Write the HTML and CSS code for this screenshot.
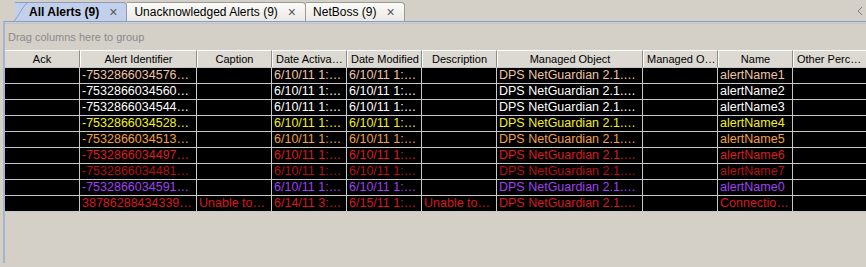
FILE: index.html
```html
<!doctype html>
<html lang="en">
  <head>
    <meta charset="UTF-8" />
    <title>Alerts</title>
    <link rel="stylesheet" href="styles.css">
  </head>
  <body>
    <div class="tabs">
      <div class="tab active">
        <svg class="tab-slant" width="14" height="19" viewBox="0 0 14 19">
          <path d="M0 19 C5 14 8 5 13 1 L14 0 L14 19 Z" fill="#c3d0ec" />
          <path d="M0 19 C5 14 8 5 13 1 L14 0.5" fill="none" stroke="#8c9cbc" />
        </svg>
        <span class="tab-label">All Alerts (9)</span>
        <span class="tab-close">&times;</span>
      </div>
      <div class="tab">
        <span class="tab-label">Unacknowledged Alerts (9)</span>
        <span class="tab-close">&times;</span>
      </div>
      <div class="tab">
        <span class="tab-label">NetBoss (9)</span>
        <span class="tab-close">&times;</span>
      </div>
      <svg class="scroll-left" width="6" height="10" viewBox="0 0 6 10">
        <path d="M5 1 L1 5 L5 9" fill="none" stroke="#808080" />
      </svg>
    </div>

    <div class="panel">
      <div class="group-box">Drag columns here to group</div>

      <div class="grid">
        <div class="head">Ack</div>
        <div class="head">Alert Identifier</div>
        <div class="head">Caption</div>
        <div class="head left">Date Activa…</div>
        <div class="head left">Date Modified</div>
        <div class="head">Description</div>
        <div class="head">Managed Object</div>
        <div class="head left">Managed O…</div>
        <div class="head">Name</div>
        <div class="head left">Other Perc…</div>
      </div>
      <div class="grid rows" id="rows"></div>
    </div>

    <script>
      const rows = [
        ['peach', '-7532866034576…', '', '6/10/11 1:…', '6/10/11 1:…', '', 'alertName1'],
        ['white', '-7532866034560…', '', '6/10/11 1:…', '6/10/11 1:…', '', 'alertName2'],
        ['white', '-7532866034544…', '', '6/10/11 1:…', '6/10/11 1:…', '', 'alertName3'],
        ['yellow', '-7532866034528…', '', '6/10/11 1:…', '6/10/11 1:…', '', 'alertName4'],
        ['orange', '-7532866034513…', '', '6/10/11 1:…', '6/10/11 1:…', '', 'alertName5'],
        ['red', '-7532866034497…', '', '6/10/11 1:…', '6/10/11 1:…', '', 'alertName6'],
        ['darkred', '-7532866034481…', '', '6/10/11 1:…', '6/10/11 1:…', '', 'alertName7'],
        ['purple', '-7532866034591…', '', '6/10/11 1:…', '6/10/11 1:…', '', 'alertName0'],
        ['red2', '38786288434339…', 'Unable to…', '6/14/11 3:…', '6/15/11 1:…', 'Unable to…', 'Connectio…']
      ];

      const body = document.getElementById('rows');
      rows.forEach(function (r) {
        const cells = ['', r[1], r[2], r[3], r[4], r[5], 'DPS NetGuardian 2.1.…', '', r[6], ''];
        cells.forEach(function (text) {
          const cell = document.createElement('div');
          cell.className = 'cell ' + r[0];
          cell.textContent = text;
          body.appendChild(cell);
        });
      });
    </script>
  </body>
</html>
```

FILE: styles.css
```css
body {
  margin: 0;
  background: #d4d0c8;
  font-family: "Liberation Sans", Arial, sans-serif;
  font-size: 11px;
  overflow: hidden;
}
.tabs {
  display: flex;
  align-items: flex-end;
  height: 21px;
  padding-left: 15px;
  position: relative;
}
.tab {
  display: flex;
  align-items: center;
  height: 18px;
  padding: 0 9px 0 7px;
  background: linear-gradient(#fbfbf9, #ebe9e3);
  border: 1px solid #9c9a94;
  border-bottom: none;
  border-left: none;
  border-radius: 0 4px 0 0;
  color: #000;
  font-size: 12px;
}
.tab.active {
  background: #c3d0ec;
  border-color: #8c9cbc;
  padding-left: 0;
  font-weight: bold;
}
.tab-slant {
  display: block;
  margin-left: -1px;
  margin-right: 1px;
  align-self: flex-end;
}
.tab-close {
  margin-left: 10px;
  color: #555;
  font-size: 14px;
  font-weight: normal;
  line-height: 1;
}
.scroll-left {
  position: absolute;
  right: 3px;
  top: 6px;
}
.panel {
  margin-left: 3px;
  border-top: 1px solid #8c9cbc;
  border-left: 2px solid #a7b4d0;
  padding-top: 1px;
  height: 240px;
  overflow: hidden;
}
.group-box {
  height: 26px;
  line-height: 26px;
  padding-left: 3px;
  color: #8a8a8a;
  border-top: 1px solid #b8c4de;
}
.grid {
  display: grid;
  grid-template-columns: 75px 117px 75px 75px 75px 75px 146px 75px 75px 90px;
  width: 880px;
}
.rows {
  border-top: 1px solid #c8c8c8;
}
.head {
  height: 17px;
  line-height: 17px;
  text-align: center;
  background: #dcd9d2;
  border-top: 1px solid #fff;
  border-left: 1px solid #fff;
  border-right: 1px solid #8e8c86;
  box-sizing: border-box;
  white-space: nowrap;
  overflow: hidden;
}
.head.left {
  text-align: left;
  padding-left: 3px;
}
.head:first-child {
  border-left: none;
}
.cell {
  height: 16px;
  line-height: 15px;
  background: #000;
  border-right: 1px solid #c8c8c8;
  border-bottom: 1px solid #c8c8c8;
  box-sizing: border-box;
  padding-left: 2px;
  font-size: 12.5px;
  white-space: nowrap;
  overflow: hidden;
}
.peach { color: #f2c4a6; }
.white { color: #ffffff; }
.yellow { color: #f4f01c; }
.orange { color: #f0a040; }
.red { color: #dc1c1c; }
.darkred { color: #b41010; }
.purple { color: #a040f0; }
.red2 { color: #d81818; }
```
